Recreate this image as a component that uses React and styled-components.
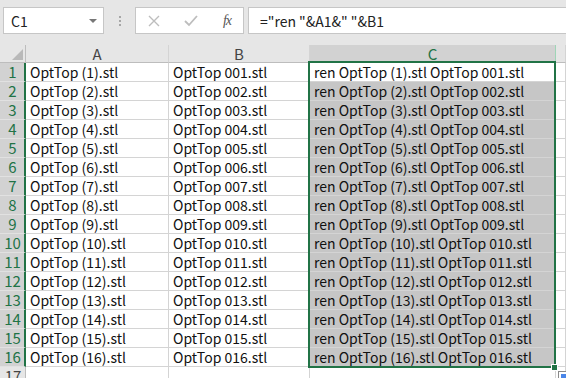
import React from 'react';
import styled, { createGlobalStyle } from 'styled-components';

const Global = createGlobalStyle`
  html, body { margin: 0; padding: 0; background: #e6e6e6; overflow: hidden; }
  body { font-family: "Noto Sans CJK SC", "Liberation Sans", sans-serif; }
`;

const Page = styled.div`
  width: 566px;
  height: 378px;
  overflow: hidden;
  background: #e6e6e6;
`;

const FormulaBar = styled.div`
  height: 45px;
  display: flex;
  align-items: flex-start;
  padding: 7px 0 0 3px;
  box-sizing: border-box;
`;

const NameBox = styled.div`
  width: 101px;
  height: 27px;
  box-sizing: border-box;
  background: #fff;
  border: 1px solid #c6c6c6;
  display: flex;
  align-items: center;
  justify-content: space-between;
  padding: 0 6px 0 7px;
  font-size: 14px;
  color: #222;
`;

const Caret = styled.span`
  width: 0;
  height: 0;
  border-left: 4px solid transparent;
  border-right: 4px solid transparent;
  border-top: 4px solid #777;
`;

const Grip = styled.div`
  width: 31px;
  height: 27px;
  display: flex;
  flex-direction: column;
  align-items: center;
  justify-content: center;
  gap: 2px;
  span {
    width: 2px;
    height: 2px;
    background: #a6a6a6;
  }
`;

const Buttons = styled.div`
  width: 109px;
  height: 27px;
  box-sizing: border-box;
  background: #fff;
  border: 1px solid #c6c6c6;
  display: flex;
  align-items: center;
  justify-content: space-between;
  padding: 0 12px 0 12px;
`;

const Fx = styled.span`
  font-family: "Liberation Serif", serif;
  font-style: italic;
  font-size: 14px;
  color: #555;
  letter-spacing: -1px;
`;

const Input = styled.div`
  flex: 1;
  margin-left: 4px;
  height: 27px;
  box-sizing: border-box;
  background: #fff;
  border: 1px solid #c6c6c6;
  border-right: none;
  display: flex;
  align-items: center;
  padding-left: 11px;
  font-size: 14px;
  color: #222;
  white-space: pre;
`;

const SheetWrap = styled.div`
  position: relative;
`;

const Grid = styled.div`
  display: grid;
  grid-template-columns: 26px 143px 141px 246px 1fr;
  grid-auto-rows: 19px;
  grid-template-rows: 18px;
  background: #fff;
`;

const Cell = styled.div`
  box-sizing: border-box;
  border-right: 1px solid #d4d4d4;
  border-bottom: 1px solid #d4d4d4;
  background: ${({ $sel }) => ($sel ? '#c6c6c6' : '#fff')};
  font-size: 14px;
  line-height: 18px;
  color: #111;
  padding-left: 4px;
  white-space: nowrap;
  overflow: hidden;
`;

const ColHead = styled.div`
  box-sizing: border-box;
  border-right: 1px solid ${({ $sel }) => ($sel ? '#9fd5b7' : '#d4d4d4')};
  border-bottom: 1px solid ${({ $sel }) => ($sel ? '#217346' : '#bdbdbd')};
  background: ${({ $sel }) => ($sel ? '#d2d2d2' : '#e6e6e6')};
  color: ${({ $sel }) => ($sel ? '#217346' : '#444')};
  font-size: 15px;
  line-height: 17px;
  text-align: center;
`;

const Corner = styled.div`
  box-sizing: border-box;
  background: #e6e6e6;
  border-right: 1px solid #bdbdbd;
  border-bottom: 1px solid #bdbdbd;
  position: relative;
  &::after {
    content: '';
    position: absolute;
    right: 2px;
    bottom: 2px;
    width: 0;
    height: 0;
    border-left: 11px solid transparent;
    border-bottom: 11px solid #b9b9b9;
  }
`;

const RowHead = styled.div`
  box-sizing: border-box;
  background: ${({ $sel }) => ($sel ? '#d2d2d2' : '#e6e6e6')};
  border-bottom: 1px solid ${({ $sel }) => ($sel ? '#e1e1e1' : '#bdbdbd')};
  border-right: ${({ $sel }) => ($sel ? '2px solid #217346' : '1px solid #bdbdbd')};
  color: ${({ $sel }) => ($sel ? '#217346' : '#444')};
  font-size: 15px;
  line-height: 18px;
  text-align: center;
  padding-left: 1px;
`;

const Selection = styled.div`
  position: absolute;
  left: 308px;
  top: 16px;
  width: 248px;
  height: 307px;
  box-sizing: border-box;
  border: 2px solid #217346;
  pointer-events: none;
`;

const FillHandle = styled.div`
  position: absolute;
  left: 551px;
  top: 319px;
  width: 7px;
  height: 7px;
  box-sizing: border-box;
  background: #217346;
  border: 1px solid #fff;
`;

const QuickIcon = styled.div`
  position: absolute;
  left: 558px;
  top: 326px;
  width: 12px;
  height: 10px;
  box-sizing: border-box;
  background: #fff;
  border: 1px solid #8a8a8a;
  &::after {
    content: '';
    position: absolute;
    left: 2px;
    top: 2px;
    width: 8px;
    height: 4px;
    background: #4a86e8;
  }
`;

const pad = (n) => String(n).padStart(3, '0');
const rows = Array.from({ length: 17 }, (_, i) => i + 1);

export default function App() {
  return (
    <Page>
      <Global />
      <FormulaBar>
        <NameBox>
          C1
          <Caret />
        </NameBox>
        <Grip>
          <span />
          <span />
          <span />
        </Grip>
        <Buttons>
          <svg width="12" height="12" viewBox="0 0 12 12">
            <path d="M1 1 L11 11 M11 1 L1 11" stroke="#bdbdbd" strokeWidth="1.4" fill="none" />
          </svg>
          <svg width="14" height="12" viewBox="0 0 14 12">
            <path d="M1 6 L5 10 L13 1" stroke="#bdbdbd" strokeWidth="1.8" fill="none" />
          </svg>
          <Fx>fx</Fx>
        </Buttons>
        <Input>{'="ren "&A1&" "&B1'}</Input>
      </FormulaBar>
      <SheetWrap>
        <Grid>
          <Corner />
          <ColHead>A</ColHead>
          <ColHead>B</ColHead>
          <ColHead $sel>C</ColHead>
          <ColHead />
          {rows.map((r) => {
            const sel = r <= 16;
            return (
              <React.Fragment key={r}>
                <RowHead $sel={sel}>{r}</RowHead>
                <Cell>{sel ? `OptTop (${r}).stl` : ''}</Cell>
                <Cell>{sel ? `OptTop ${pad(r)}.stl` : ''}</Cell>
                <Cell $sel={sel && r > 1}>
                  {sel ? `ren OptTop (${r}).stl OptTop ${pad(r)}.stl` : ''}
                </Cell>
                <Cell />
              </React.Fragment>
            );
          })}
        </Grid>
        <Selection />
        <FillHandle />
        <QuickIcon />
      </SheetWrap>
    </Page>
  );
}
